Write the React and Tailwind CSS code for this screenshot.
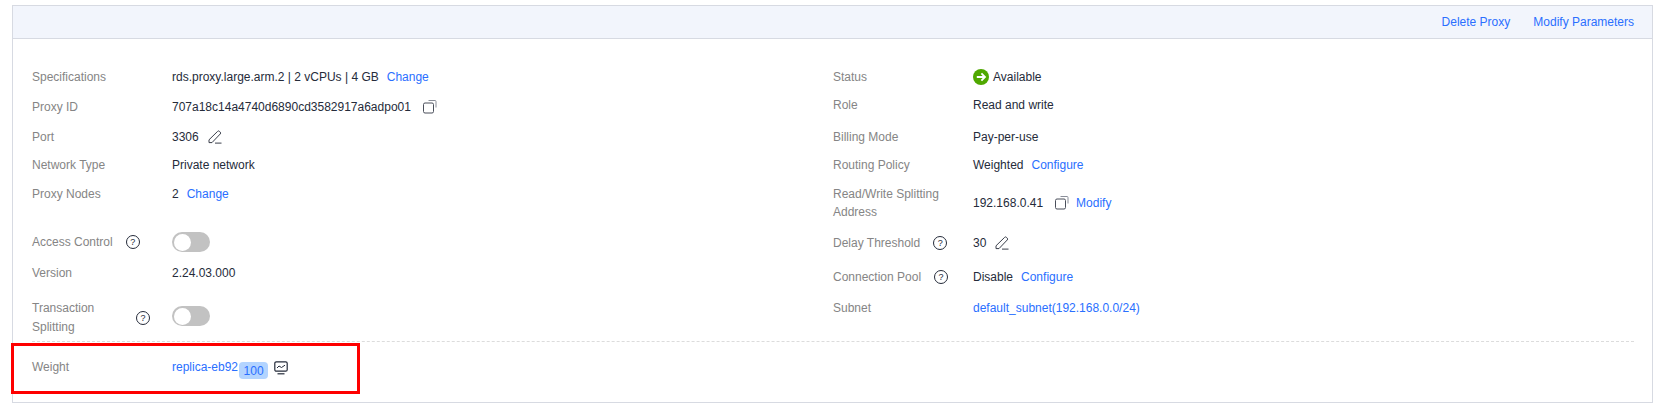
import React from 'react';

const LINK = 'text-[#2a6fff] whitespace-nowrap';

function CopyIcon({ className = '' }) {
  return (
    <svg viewBox="0 0 14 14" className={`h-[14px] w-[14px] ${className}`} fill="none" stroke="#4a4f5b" strokeWidth="1">
      <rect x="0.5" y="3" width="10" height="10" rx="1.5" />
      <path d="M5.5 0.5h6.5a1 1 0 0 1 1 1v6" stroke="#8a8e99" />
    </svg>
  );
}

function EditIcon({ className = '' }) {
  return (
    <svg viewBox="0 0 14 14" className={`h-[14px] w-[14px] ${className}`} fill="none" stroke="#3a3f4b" strokeWidth="1">
      <path d="M1 9.8 9.6 1.4a1.3 1.3 0 0 1 1.9 0l.7.7a1.3 1.3 0 0 1 0 1.9L4 12.6H1z" />
      <path d="M7 13.1h6.5" />
    </svg>
  );
}

function HelpIcon({ className = '' }) {
  return (
    <span className={`flex h-[14px] w-[14px] shrink-0 items-center justify-center rounded-full border border-[#252b3a] text-[9px] leading-none text-[#252b3a] ${className}`}>
      ?
    </span>
  );
}

function StatusIcon() {
  return (
    <svg viewBox="0 0 16 16" className="h-4 w-4 shrink-0">
      <circle cx="8" cy="8" r="8" fill="#4fa800" />
      <path d="M3.8 8h8M8.4 4.4 12 8l-3.6 3.6" fill="none" stroke="#fff" strokeWidth="1.8" />
    </svg>
  );
}

function MonitorIcon() {
  return (
    <svg viewBox="0 0 14 14" className="h-[14px] w-[14px]" fill="none" stroke="#252b3a" strokeWidth="1.2">
      <rect x="0.8" y="0.8" width="12.4" height="9.4" rx="1.5" />
      <path d="M3 7l2-2 2.5 1.5L11 4.2" strokeWidth="1" />
      <path d="M3.5 12.8h7" />
    </svg>
  );
}

function Toggle() {
  return (
    <span className="flex h-5 w-[38px] items-center rounded-full bg-[#c2c2c2] pl-[1.5px]">
      <span className="h-[17px] w-[17px] rounded-full bg-white" />
    </span>
  );
}

function Row({ label, h, help, mt = '', children }) {
  return (
    <div className={`flex items-center ${h} ${mt}`}>
      <div className="flex w-[140px] shrink-0 items-center">
        <span className={`text-[#858585] ${help ? 'mr-[13px]' : ''}`}>{label}</span>
        {help && <HelpIcon />}
      </div>
      <div className="flex items-center text-[#252b3a]">{children}</div>
    </div>
  );
}

export default function App() {
  return (
    <div className="relative h-[409px] w-[1656px] bg-white pt-[5px] pl-3 pr-[3px] font-['Liberation_Sans',Arial,sans-serif] text-xs">
      <div className="h-[398px] border border-[#d7dae2]">
        {/* Toolbar */}
        <div className="flex h-[33px] items-center justify-end gap-[23px] border-b border-[#d7dae2] bg-[#f2f5fc] pr-[18px]">
          <a className={LINK}>Delete Proxy</a>
          <a className={LINK}>Modify Parameters</a>
        </div>

        <div className="pl-[19px] pr-[18px] pt-[22px]">
          <div className="flex">
            <div className="w-[801px]">
              <Row label="Specifications" h="h-8">
                rds.proxy.large.arm.2 | 2 vCPUs | 4 GB
                <a className={`${LINK} ml-2`}>Change</a>
              </Row>
              <Row label="Proxy ID" h="h-7">
                707a18c14a4740d6890cd3582917a6adpo01
                <CopyIcon className="ml-3" />
              </Row>
              <Row label="Port" h="h-6" mt="mt-1">
                3306
                <EditIcon className="ml-[9px]" />
              </Row>
              <Row label="Network Type" h="h-8">
                Private network
              </Row>
              <Row label="Proxy Nodes" h="h-[26px]">
                2<a className={`${LINK} ml-2`}>Change</a>
              </Row>
              <Row label="Access Control" h="h-10" mt="mt-[15px]" help>
                <Toggle />
              </Row>
              <Row label="Version" h="h-[22px]">
                2.24.03.000
              </Row>
              <div className="mt-[11px] flex h-[46px] items-center">
                <div className="flex w-[140px] shrink-0 items-center">
                  <span className="w-[104px] leading-[19px] text-[#858585]">Transaction<br />Splitting</span>
                  <HelpIcon />
                </div>
                <div className="mb-1 flex">
                  <Toggle />
                </div>
              </div>
            </div>

            <div className="flex-1">
              <Row label="Status" h="h-8">
                <StatusIcon />
                <span className="ml-1">Available</span>
              </Row>
              <Row label="Role" h="h-6">
                Read and write
              </Row>
              <Row label="Billing Mode" h="h-10">
                Pay-per-use
              </Row>
              <Row label="Routing Policy" h="h-4">
                Weighted
                <a className={`${LINK} ml-2`}>Configure</a>
              </Row>
              <div className="mt-1 flex h-[52px] items-center">
                <div className="w-[140px] shrink-0 pr-4 leading-[18px] text-[#858585]">Read/Write Splitting Address</div>
                <div className="flex items-center text-[#252b3a]">
                  192.168.0.41
                  <CopyIcon className="ml-3" />
                  <a className={`${LINK} ml-[7px]`}>Modify</a>
                </div>
              </div>
              <Row label="Delay Threshold" h="h-7" help>
                30
                <EditIcon className="ml-[9px]" />
              </Row>
              <Row label="Connection Pool" h="h-10" help>
                Disable
                <a className={`${LINK} ml-2`}>Configure</a>
              </Row>
              <Row label="Subnet" h="h-[22px]">
                <a className={LINK}>default_subnet(192.168.0.0/24)</a>
              </Row>
            </div>
          </div>

          <div className="border-t border-dashed border-[#dcdcdc]" />

          {/* Weight row */}
          <div className="flex h-[50px] items-center">
            <span className="w-[140px] shrink-0 text-[#858585]">Weight</span>
            <a className={LINK}>replica-eb92</a>
            <span className="ml-[1px] mt-[7px] flex h-[17px] w-[29px] items-center justify-center rounded-sm bg-[#b3d4ff] text-[#2a6fff]">100</span>
            <span className="ml-[6px] mt-[2px]"><MonitorIcon /></span>
          </div>
        </div>
      </div>

      {/* annotation drawn over the screenshot */}
      <div className="pointer-events-none absolute left-[11px] top-[343px] h-[51px] w-[349px] border-[3px] border-[#fe0000]" />
    </div>
  );
}
